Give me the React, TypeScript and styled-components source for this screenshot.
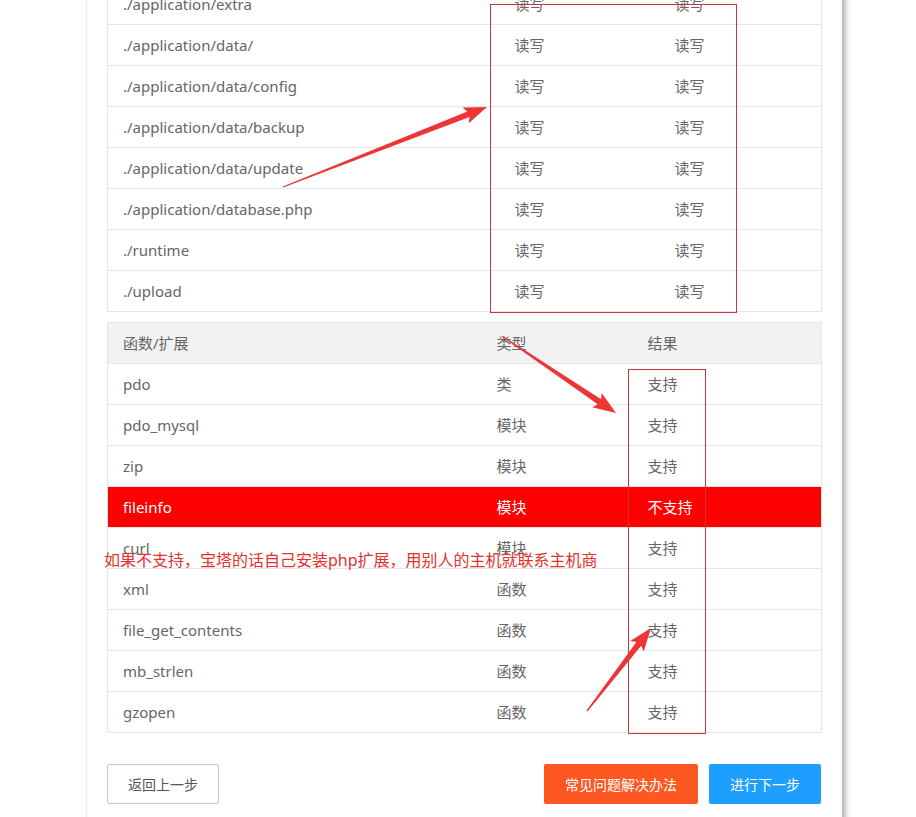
import React from "react";
import styled, { createGlobalStyle } from "styled-components";

const GlobalStyle = createGlobalStyle`
  html, body {
    margin: 0;
    padding: 0;
    background: #fff;
  }
  body {
    font-family: "Noto Sans", "Noto Sans CJK SC", sans-serif;
    font-size: 14px;
    color: #666;
  }
`;

const Page = styled.div`
  position: relative;
  display: flex;
  flex-direction: column;
  width: 916px;
  height: 817px;
  overflow: hidden;
`;

const Card = styled.div`
  box-sizing: border-box;
  width: 756px;
  margin: -17px 0 0 86px;
  padding: 0 21px 40px 20px;
  background: #fff;
  border-left: 1px solid #ececec;
  box-shadow: 4px 0 6px -1px rgba(0, 0, 0, 0.35);
  min-height: 860px;
`;

const Table = styled.table<{ $gap?: number }>`
  width: 100%;
  table-layout: fixed;
  border-collapse: collapse;
  border: 1px solid #e6e6e6;
  margin-top: ${(p) => p.$gap ?? 0}px;
`;

const Col = styled.col<{ $w: number }>`
  width: ${(p) => p.$w}px;
`;

const Row = styled.tr<{ $head?: boolean; $bad?: boolean }>`
  background: ${(p) => (p.$bad ? "#ff0000" : p.$head ? "#f2f2f2" : "#fff")};
  color: ${(p) => (p.$bad ? "#fff" : "#666")};
`;

const Cell = styled.td`
  height: 40px;
  padding: 0 15px;
  border-top: 1px solid #e6e6e6;
  font-size: 15px;
  line-height: 20px;
  white-space: nowrap;
`;

const Actions = styled.div`
  display: flex;
  justify-content: space-between;
  margin-top: 31px;
`;

const Group = styled.div`
  display: flex;
  gap: 11px;
`;

const Button = styled.button<{ $kind?: "plain" | "warm" | "normal" }>`
  box-sizing: border-box;
  height: 40px;
  padding: 0 20px;
  border-radius: 2px;
  font-family: inherit;
  font-size: 14px;
  cursor: pointer;
  border: 1px solid
    ${(p) => (p.$kind === "plain" ? "#c9c9c9" : "transparent")};
  background: ${(p) =>
    p.$kind === "warm" ? "#ff5722" : p.$kind === "normal" ? "#1e9fff" : "#fff"};
  color: ${(p) => (p.$kind === "plain" ? "#555" : "#fff")};
`;

const Overlay = styled.svg`
  position: absolute;
  left: 0;
  top: 0;
  pointer-events: none;
`;

const Note = styled.div`
  position: absolute;
  left: 104px;
  top: 550px;
  font-size: 16px;
  line-height: 20px;
  color: #e5302d;
  white-space: nowrap;
`;

const dirs = [
  "./application/extra",
  "./application/data/",
  "./application/data/config",
  "./application/data/backup",
  "./application/data/update",
  "./application/database.php",
  "./runtime",
  "./upload",
];

const exts: [string, string, boolean][] = [
  ["pdo", "类", true],
  ["pdo_mysql", "模块", true],
  ["zip", "模块", true],
  ["fileinfo", "模块", false],
  ["curl", "模块", true],
  ["xml", "函数", true],
  ["file_get_contents", "函数", true],
  ["mb_strlen", "函数", true],
  ["gzopen", "函数", true],
];

// snagit-style arrow: thin tail widening into a barbed head
function arrow(x1: number, y1: number, x2: number, y2: number) {
  const dx = x2 - x1;
  const dy = y2 - y1;
  const len = Math.hypot(dx, dy);
  const ux = dx / len;
  const uy = dy / len;
  const nx = -uy;
  const ny = ux;
  const bx = x2 - ux * 20;
  const by = y2 - uy * 20;
  const pts = [
    [x1 + nx * 0.6, y1 + ny * 0.6],
    [bx + nx * 3, by + ny * 3],
    [bx - ux * 3 + nx * 8.5, by - uy * 3 + ny * 8.5],
    [x2, y2],
    [bx - ux * 3 - nx * 8.5, by - uy * 3 - ny * 8.5],
    [bx - nx * 3, by - ny * 3],
    [x1 - nx * 0.6, y1 - ny * 0.6],
  ];
  return pts.map((p) => p.map((v) => v.toFixed(1)).join(",")).join(" ");
}

export default function App() {
  return (
    <>
      <GlobalStyle />
      <Page>
        <Card>
          <Table>
            <colgroup>
              <Col $w={392} />
              <Col $w={160} />
              <Col $w={162} />
            </colgroup>
            <tbody>
              {dirs.map((d) => (
                <Row key={d}>
                  <Cell>{d}</Cell>
                  <Cell>读写</Cell>
                  <Cell>读写</Cell>
                </Row>
              ))}
            </tbody>
          </Table>
          <Table $gap={10}>
            <colgroup>
              <Col $w={374} />
              <Col $w={151} />
              <Col $w={189} />
            </colgroup>
            <tbody>
              <Row $head>
                <Cell>函数/扩展</Cell>
                <Cell>类型</Cell>
                <Cell>结果</Cell>
              </Row>
              {exts.map(([name, kind, ok]) => (
                <Row key={name} $bad={!ok}>
                  <Cell>{name}</Cell>
                  <Cell>{kind}</Cell>
                  <Cell>{ok ? "支持" : "不支持"}</Cell>
                </Row>
              ))}
            </tbody>
          </Table>
          <Actions>
            <Button $kind="plain">返回上一步</Button>
            <Group>
              <Button $kind="warm">常见问题解决办法</Button>
              <Button $kind="normal">进行下一步</Button>
            </Group>
          </Actions>
        </Card>

        <Overlay width={916} height={817} viewBox="0 0 916 817">
          <g fill="none" stroke="#c8353f" strokeWidth={1}>
            <rect x={490.5} y={4.5} width={246} height={308} />
            <rect x={628.5} y={369.5} width={77} height={364} />
          </g>
          <g fill="#ec3535">
            <polygon points={arrow(283, 187, 487, 107)} />
            <polygon points={arrow(502, 336, 616, 413)} />
            <polygon points={arrow(587, 711, 651, 628)} />
          </g>
        </Overlay>
        <Note>如果不支持，宝塔的话自己安装php扩展，用别人的主机就联系主机商</Note>
      </Page>
    </>
  );
}
